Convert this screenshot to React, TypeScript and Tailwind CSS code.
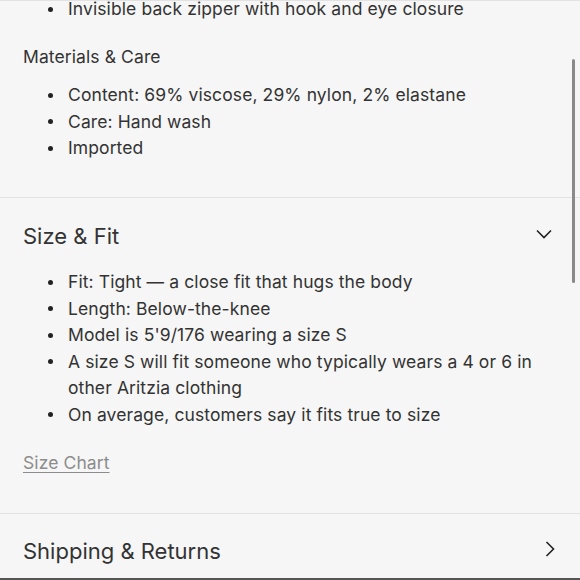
import React from "react";

const Bullet = ({ children }: { children: React.ReactNode }) => (
  <li className="flex">
    <span className="w-[23px] h-[26.5px] flex-none flex items-center">
      <span className="ml-[3px] w-[5px] h-[5px] rounded-full bg-[#222]" />
    </span>
    <span>{children}</span>
  </li>
);

export default function App() {
  return (
    <div className="w-[580px] h-[580px] bg-[#f6f6f6] relative overflow-hidden text-[#333] font-['Inter',sans-serif] text-[17.5px] tracking-[0.1px] leading-[26.5px]">
      <div className="h-[198px] border-t border-b border-[#e2e2e2] pl-[45px]">
        <ul className="-mt-[5px]">
          <Bullet>Invisible back zipper with hook and eye closure</Bullet>
        </ul>
        <div className="-ml-[22px] mt-[21px]">Materials &amp; Care</div>
        <ul className="mt-[12px]">
          <Bullet>Content: 69% viscose, 29% nylon, 2% elastane</Bullet>
          <Bullet>Care: Hand wash</Bullet>
          <Bullet>Imported</Bullet>
        </ul>
      </div>
      <div className="h-[316px] border-b border-[#e2e2e2] px-[23px]">
        <div className="flex items-center justify-between h-[76px] pr-[2px]">
          <span className="text-[22px] tracking-normal">Size &amp; Fit</span>
          <svg width="16" height="10" viewBox="0 0 16 10" className="mr-[3px] -mt-[4px]">
            <path d="M1 1.5 L8 8.5 L15 1.5" fill="none" stroke="#222" strokeWidth="1.6" />
          </svg>
        </div>
        <ul className="pl-[22px] -mt-[5px]">
          <Bullet>Fit: Tight — a close fit that hugs the body</Bullet>
          <Bullet>Length: Below-the-knee</Bullet>
          <Bullet>Model is 5'9/176 wearing a size S</Bullet>
          <Bullet>
            A size S will fit someone who typically wears a 4 or 6 in
            <br />
            other Aritzia clothing
          </Bullet>
          <Bullet>On average, customers say it fits true to size</Bullet>
        </ul>
        <div className="mt-[22px]">
          <span className="text-[#8c8c8c] underline underline-offset-[3px]">Size Chart</span>
        </div>
      </div>
      <div className="h-[66px] border-b-2 border-[#555] px-[23px] flex items-center justify-between">
        <span className="text-[22px] tracking-normal mt-[10px]">Shipping &amp; Returns</span>
        <svg width="10" height="16" viewBox="0 0 10 16" className="mr-[2px] mt-[6px]">
          <path d="M1.5 1 L8.5 8 L1.5 15" fill="none" stroke="#222" strokeWidth="1.6" />
        </svg>
      </div>
      <div className="absolute left-[572px] top-[59px] w-[3px] h-[224px] bg-[#8a8a8a] rounded-full" />
    </div>
  );
}
